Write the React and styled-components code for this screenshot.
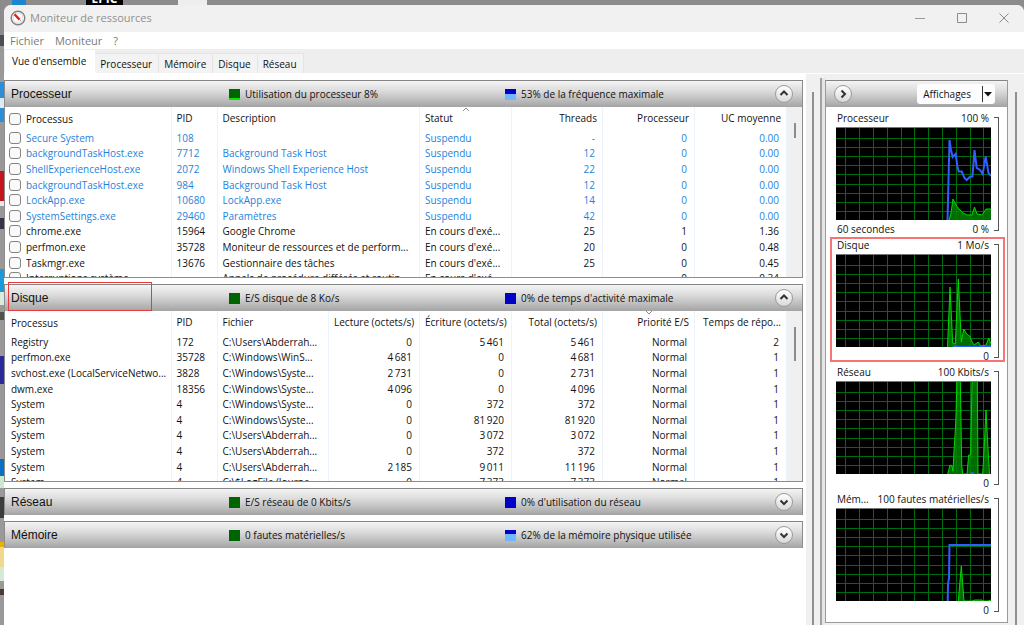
import styled, { createGlobalStyle, css } from "styled-components";
import { useState } from "react";

const GlobalStyle = createGlobalStyle`
  * {
    box-sizing: border-box;
  }
  body {
    margin: 0;
    background: #8d8b8b;
    color: #111;
    font-family: "Open Sans", "Noto Sans", sans-serif;
    font-size: 10px;
    line-height: 14px;
  }
  button, input {
    font: inherit;
    color: inherit;
  }
`;

const Desktop = styled.div`
  position: relative;
  min-height: 100vh;
  padding: 5px 0 0 4px;
  display: flex;
  flex-direction: column;
  overflow: hidden;
  background: linear-gradient(
    #8d8b8b 35px, #4d4d55 35px 46px, #9a9898 46px 82px,
    #2b8ed6 82px 98px, #dfeaf3 98px 108px, #2b8ed6 108px 122px, #9a9898 122px 171px,
    #c4151c 171px 201px, #e9e9e9 201px 206px, #9a9898 206px 218px,
    #35354a 218px 229px, #9a9898 229px 269px, #1b9ad8 269px 292px,
    #dcebdc 292px 305px, #9a9898 305px 312px, #50504c 312px 320px,
    #9a9898 320px 356px, #2a2a9c 356px 384px, #9a9898 384px 459px,
    #0b6fc4 459px 476px, #cfe6cf 476px 488px, #9a9898 488px 497px,
    #3c3c3c 497px 518px, #9a9898 518px 542px, #f0ae00 542px 547px,
    #f0d98c 547px 567px, #d5ead5 567px 581px, #9a9898 581px 589px,
    #4a3a34 589px 595px, #9a9898 595px
  );
`;

const DesktopIcons = styled.div`
  position: absolute;
  top: 0;
  left: 12px;
  right: 0;
  height: 6px;
  display: flex;
  align-items: flex-end;
  overflow: hidden;
`;

const ShortcutTile = styled.span`
  width: ${(p) => p.$width};
  height: 14px;
  margin-right: ${(p) => p.$gap || "0"};
  background: ${(p) => p.$color};
  color: #fff;
  font-weight: 700;
  font-size: 12px;
  line-height: 14px;
  text-align: center;
`;

const Window = styled.main`
  position: relative;
  flex: 1;
  display: flex;
  flex-direction: column;
  border-radius: 7px 7px 0 0;
  overflow: hidden;
  background: #f0f0f0;
`;

const TitleBar = styled.header`
  height: 27px;
  padding: 0 14px 2px 6px;
  display: flex;
  align-items: center;
  gap: 4px;
  background: #f1f1f1;
  color: #909090;
  h1 {
    flex: 1;
    margin: 0;
    font-size: 11px;
    font-weight: 400;
  }
`;

const WindowButtons = styled.div`
  display: flex;
  gap: 29px;
`;

const IconButton = styled.button`
  width: 13px;
  height: 13px;
  padding: 0;
  border: none;
  background: none;
  display: flex;
  align-items: center;
  justify-content: center;
`;

const MenuBar = styled.nav`
  height: 17px;
  padding: 0 6px;
  display: flex;
  align-items: center;
  gap: 11px;
  background: #fff;
  color: #7a7a7a;
  button {
    padding: 0;
    border: none;
    background: none;
    font-size: 11px;
  }
`;

const TabBar = styled.div`
  height: 25px;
  padding-left: 1px;
  display: flex;
  align-items: flex-end;
  background: #eee;
  border-bottom: 1px solid #fff;
`;

const Tab = styled.button`
  height: 20px;
  padding: 0 6px 0 5px;
  border: 1px solid #e4e4e4;
  border-left: none;
  border-bottom: none;
  background: #f3f3f3;
  ${(p) =>
    p.$active &&
    css`
      height: 23px;
      padding: 0 8px 3px 7px;
      border-color: #fff;
      background: #fff;
    `}
`;

const Content = styled.div`
  flex: 1;
  display: flex;
  background: #f0f0f0;
`;

const Sections = styled.div`
  flex: 1;
  min-width: 0;
  padding: 6px 3px 0 0;
  display: flex;
  flex-direction: column;
  gap: 6px;
  background: #fff;
`;

const PaneScroll = styled.div`
  width: ${(p) => p.$width};
  padding-top: 18px;
  display: flex;
  justify-content: center;
  background: #f0f0f0;
  &::after {
    content: "";
    width: 2px;
    background: #909090;
  }
`;

const Splitter = styled.div`
  width: 5px;
  margin-top: 4px;
  border-left: 2px solid #a3a3a3;
  background: #e6e6e6;
`;

const Panel = styled.section`
  position: relative;
  border: 1px solid #8c8c8c;
  border-top: none;
  border-bottom-width: ${(p) => (p.$expanded ? "1px" : "0")};
`;

const barGradient = css`
  border-top: 1px solid #858585;
  background: linear-gradient(#f4f4f4, #dedede 35%, #c4c4c4 65%, #a4a4a4);
`;

const PanelHeader = styled.header`
  height: 27px;
  padding: 0 9px 0 6px;
  display: grid;
  grid-template-columns: 218px 276px 1fr auto;
  align-items: center;
  ${barGradient}
  h2 {
    margin: 0;
    font-family: "Liberation Sans", Arial, sans-serif;
    font-size: 12px;
    font-weight: 400;
  }
`;

const Indicator = styled.span`
  display: flex;
  align-items: center;
  gap: 5px;
  &::before {
    content: "";
    width: 11px;
    height: 11px;
    background: ${(p) => p.$fill};
  }
`;

const RoundButton = styled.button`
  width: 18px;
  height: 18px;
  padding: 0;
  border: 1px solid #9a9a9a;
  border-radius: 50%;
  background: linear-gradient(#fff, #d9d9d9);
  display: flex;
  align-items: center;
  justify-content: center;
`;

const PanelBody = styled.div`
  height: 170px;
  display: flex;
  overflow: hidden;
  background: #fff;
`;

const TableScroll = styled.div`
  flex: none;
  width: 15px;
  padding-top: ${(p) => p.$top};
  background: #f0f0f0;
  &::after {
    content: "";
    display: block;
    width: 2px;
    height: ${(p) => p.$thumb};
    margin: 0 auto;
    background: #8c8c8c;
  }
`;

const DataTable = styled.table`
  flex: 1;
  min-width: 0;
  width: 100%;
  height: 179px;
  table-layout: fixed;
  border-collapse: collapse;
`;

const Cell = styled.td`
  padding: 0 ${(p) => (p.$right ? "7px" : "5px")} 0 5px;
  border-right: 1px solid #edf3fa;
  text-align: ${(p) => (p.$right ? "right" : "left")};
  font-weight: 400;
  white-space: nowrap;
  overflow: hidden;
  &:first-child {
    padding: 0 0 0 6px;
  }
`;

const HeadCell = styled(Cell)`
  position: relative;
  height: 23px;
  padding-right: 5px;
  padding-bottom: 2px;
  svg {
    position: absolute;
    top: 0;
    left: calc(50% - 4px);
  }
`;

const Row = styled.tr`
  color: ${(p) => (p.$suspended ? "#1f82dc" : "inherit")};
`;

const CheckLabel = styled.label`
  display: flex;
  align-items: center;
  gap: 5px;
  margin-left: -2px;
  input {
    appearance: none;
    flex: none;
    width: 12px;
    height: 12px;
    margin: 0;
    border: 1px solid #858585;
    border-radius: 3px;
    background: #f9f9f9;
  }
  input:checked {
    background: #0067c0;
  }
`;

const Sidebar = styled.aside`
  width: 183px;
  margin-top: 6px;
  align-self: flex-start;
  border: 1px solid #9a9a9a;
  border-top: none;
  background: #fff;
`;

const SidebarHeader = styled.header`
  height: 27px;
  padding: 0 12px 0 8px;
  display: flex;
  align-items: center;
  justify-content: space-between;
  ${barGradient}
`;

const ViewsButton = styled.button`
  height: 20px;
  padding: 0 2px 0 6px;
  border: none;
  border-radius: 3px;
  background: #fdfdfd;
  display: flex;
  align-items: center;
  gap: 10px;
`;

const Charts = styled.div`
  padding-bottom: 7px;
`;

const ChartBlock = styled.figure`
  position: relative;
  height: 127px;
  margin: 0;
  padding: 4px 8px 0 10px;
  display: grid;
  grid-template-columns: 1fr 8px;
  align-content: start;
`;

const ChartLabels = styled.figcaption`
  padding: 0 2px 0 1px;
  display: flex;
  justify-content: space-between;
  gap: 4px;
  white-space: nowrap;
`;

const ChartSvg = styled.svg`
  display: block;
  width: 100%;
  height: 93px;
  margin: 2px 0;
  background: #000;
`;

const Bracket = styled.div`
  grid-column: 2;
  grid-row: 1 / span 3;
  margin: 6px 0 5px 3px;
  border: 1px solid #555;
  border-left: none;
`;

const Marker = styled.div`
  position: absolute;
  inset: ${(p) => p.$inset};
  width: ${(p) => p.$width || "auto"};
  height: ${(p) => p.$height || "auto"};
  border: ${(p) => p.$border};
  pointer-events: none;
`;

const green = "linear-gradient(#006400, #006400)";
const greenLow = "linear-gradient(#006400 9px, #00e800 9px)";
const blue = "linear-gradient(#0000c8, #0000c8)";
const blueHalf = "linear-gradient(#0000c8 5px, #6fb7ff 5px)";
const blueThird = "linear-gradient(#0000c8 4px, #6fb7ff 4px)";

const processColumns = [
  { label: "Processus", width: 166 },
  { label: "PID", width: 46 },
  { label: "Description" },
  { label: "Statut", width: 92, sort: "up" },
  { label: "Threads", width: 91, right: true },
  { label: "Processeur", width: 92, right: true },
  { label: "UC moyenne", width: 92, right: true },
];

const processes = [
  ["Secure System", "108", "", "Suspendu", "-", "0", "0.00"],
  ["backgroundTaskHost.exe", "7712", "Background Task Host", "Suspendu", "12", "0", "0.00"],
  ["ShellExperienceHost.exe", "2072", "Windows Shell Experience Host", "Suspendu", "22", "0", "0.00"],
  ["backgroundTaskHost.exe", "984", "Background Task Host", "Suspendu", "12", "0", "0.00"],
  ["LockApp.exe", "10680", "LockApp.exe", "Suspendu", "14", "0", "0.00"],
  ["SystemSettings.exe", "29460", "Paramètres", "Suspendu", "42", "0", "0.00"],
  ["chrome.exe", "15964", "Google Chrome", "En cours d'exé...", "25", "1", "1.36"],
  ["perfmon.exe", "35728", "Moniteur de ressources et de perform...", "En cours d'exé...", "20", "0", "0.48"],
  ["Taskmgr.exe", "13676", "Gestionnaire des tâches", "En cours d'exé...", "25", "0", "0.45"],
  ["Interruptions système", "-", "Appels de procédure différés et routin...", "En cours d'exé...", "-", "0", "0.34"],
];

const diskColumns = [
  { label: "Processus", width: 166 },
  { label: "PID", width: 46 },
  { label: "Fichier" },
  { label: "Lecture (octets/s)", width: 91, right: true },
  { label: "Écriture (octets/s)", width: 92, right: true },
  { label: "Total (octets/s)", width: 91, right: true },
  { label: "Priorité E/S", width: 92, right: true, sort: "down" },
  { label: "Temps de répo...", width: 92, right: true },
];

const diskRows = [
  ["Registry", "172", "C:\\Users\\Abderrah...", "0", "5\u2009461", "5\u2009461", "Normal", "2"],
  ["perfmon.exe", "35728", "C:\\Windows\\WinS...", "4\u2009681", "0", "4\u2009681", "Normal", "1"],
  ["svchost.exe (LocalServiceNetwo...", "3828", "C:\\Windows\\Syste...", "2\u2009731", "0", "2\u2009731", "Normal", "1"],
  ["dwm.exe", "18356", "C:\\Windows\\Syste...", "4\u2009096", "0", "4\u2009096", "Normal", "1"],
  ["System", "4", "C:\\Windows\\Syste...", "0", "372", "372", "Normal", "1"],
  ["System", "4", "C:\\Windows\\Syste...", "0", "81\u2009920", "81\u2009920", "Normal", "1"],
  ["System", "4", "C:\\Users\\Abderrah...", "0", "3\u2009072", "3\u2009072", "Normal", "1"],
  ["System", "4", "C:\\Users\\Abderrah...", "0", "372", "372", "Normal", "1"],
  ["System", "4", "C:\\Users\\Abderrah...", "2\u2009185", "9\u2009011", "11\u2009196", "Normal", "1"],
  ["System", "4", "C:\\$LogFile (Journa...", "0", "7\u2009373", "7\u2009373", "Normal", "1"],
];

const charts = [
  {
    name: "Processeur",
    max: "100 %",
    footer: "60 secondes",
    min: "0 %",
    area: "113,93 115,86 117,72 120,78 123,82 127,86 131,88 136,88 138.5,80 141,87 146,88 150,82 155,82",
    line: "111.5,93 113.5,13 115,23 116.7,30 119.7,27 121.5,40 122.7,44.5 125.7,44.5 128.5,51 130.7,53 133.7,50 136.5,49.5 138.5,23 140.7,41 144,43 146.7,47 149.7,29.5 152.5,46 155,49",
  },
  {
    name: "Disque",
    max: "1 Mo/s",
    min: "0",
    marked: true,
    area: "111.5,93 114,33 116.7,89 119.3,90 122.3,25 125.3,88 127.7,75 130.7,80 133.7,82 135.7,87 138,91 142.3,88 144.7,92 150,91 152.7,84 155,90",
    line: "117,93 119,92 121,93 144,93 148,92.5 155,92.5",
  },
  {
    name: "Réseau",
    max: "100 Kbits/s",
    min: "0",
    area: "111.7,93 114,84 116,85 117,90 118,70 119.7,43 121,0 124.3,0 125.7,84 126.7,93 131,93 132.7,74 134.7,74 136,0 141.3,0 142,93 146.7,93 148.5,60 150,29 151.7,62 153.5,93",
    line: "134,93 136,92 138,93",
  },
  {
    name: "Mém...",
    max: "100 fautes matérielles/s",
    min: "0",
    area: "122.3,93 125.3,58 128,93 136,93 139,92 142,92 146,92 147,93 152,93 155,92",
    line: "111.7,93 112,76 113,70 113.5,37 155,37",
  },
];

const gridX = [9, 23, 37, 51, 65, 78, 92, 106, 120, 134, 147];
const gridY = [11, 20, 29, 38, 47, 57, 66, 75, 84];

function Chevron({ dir }) {
  const paths = {
    up: "M2.5 7 6 3.5 9.5 7",
    down: "M2.5 4.5 6 8 9.5 4.5",
    right: "M4.5 2.5 8 6 4.5 9.5",
  };
  return (
    <svg width="12" height="12" viewBox="0 0 12 12" fill="none" stroke="#333" strokeWidth="2">
      <path d={paths[dir]} />
    </svg>
  );
}

function SortMark({ dir }) {
  return (
    <svg width="8" height="5" viewBox="0 0 8 5" fill="none" stroke="#8a8a8a">
      <path d={dir === "up" ? "M1 4 4 1 7 4" : "M1 0 4 3 7 0"} />
    </svg>
  );
}

function Section({ title, first, firstFill, second, secondFill, open, children }) {
  const [expanded, setExpanded] = useState(!!open);
  return (
    <Panel $expanded={expanded}>
      <PanelHeader>
        <h2>{title}</h2>
        <Indicator $fill={firstFill}>{first}</Indicator>
        <Indicator $fill={secondFill}>{second}</Indicator>
        <RoundButton
          type="button"
          aria-label={title}
          aria-expanded={expanded}
          onClick={() => setExpanded(!expanded)}
        >
          <Chevron dir={expanded ? "up" : "down"} />
        </RoundButton>
      </PanelHeader>
      {expanded && children}
    </Panel>
  );
}

function Grid({ columns, rows, checkable }) {
  const renderName = (text) =>
    checkable ? (
      <CheckLabel>
        <input type="checkbox" />
        {text}
      </CheckLabel>
    ) : (
      text
    );

  return (
    <DataTable>
      <colgroup>
        {columns.map((c) => (
          <col key={c.label} width={c.width} />
        ))}
      </colgroup>
      <thead>
        <tr>
          {columns.map((c, i) => (
            <HeadCell as="th" key={c.label} $right={c.right}>
              {i === 0 ? renderName(c.label) : c.label}
              {c.sort && <SortMark dir={c.sort} />}
            </HeadCell>
          ))}
        </tr>
      </thead>
      <tbody>
        {rows.map((row, r) => (
          <Row key={r} $suspended={row[3] === "Suspendu"}>
            {row.map((value, i) => (
              <Cell key={i} $right={columns[i].right}>
                {i === 0 ? renderName(value) : value}
              </Cell>
            ))}
          </Row>
        ))}
      </tbody>
    </DataTable>
  );
}

function Chart({ name, max, min, footer, area, line, marked }) {
  const start = area.split(",")[0];
  const end = area.split(" ").pop().split(",")[0];
  return (
    <ChartBlock>
      <ChartLabels>
        <span>{name}</span>
        <span>{max}</span>
      </ChartLabels>
      <ChartSvg viewBox="0 0 155 93" preserveAspectRatio="none">
        <g stroke="#006c10">
          {gridX.map((x) => (
            <path key={x} d={`M${x + 0.5} 0V93`} />
          ))}
          {gridY.map((y) => (
            <path key={y} d={`M0 ${y + 0.5}H155`} />
          ))}
        </g>
        <polygon points={`${start},93 ${area} ${end},93`} fill="#008000" fillOpacity="0.85" />
        <polyline points={area} fill="none" stroke="#00d800" />
        <polyline points={line} fill="none" stroke="#2f5fff" strokeWidth="2" />
        <path d="M0 .5H155" stroke="#777" />
      </ChartSvg>
      <ChartLabels as="div">
        <span>{footer}</span>
        <span>{min}</span>
      </ChartLabels>
      <Bracket />
      {marked && <Marker $inset="3px 2px -1px 4px" $border="2px solid #f87474" />}
    </ChartBlock>
  );
}

const tabs = ["Vue d'ensemble", "Processeur", "Mémoire", "Disque", "Réseau"];

export default function App() {
  const [tab, setTab] = useState(tabs[0]);

  return (
    <>
      <GlobalStyle />
      <Desktop>
        <DesktopIcons>
          <ShortcutTile $width="14px" $gap="60px" $color="#1c86d1" />
          <ShortcutTile $width="37px" $gap="55px" $color="#000">
            EPIC
          </ShortcutTile>
          <ShortcutTile $width="29px" $color="#eee" />
        </DesktopIcons>
        <Window>
          <TitleBar>
            <svg width="16" height="16" viewBox="0 0 16 16" fill="none">
              <circle cx="8" cy="8" r="6.8" fill="#fff" stroke="#858080" strokeWidth="1.4" />
              <circle cx="8" cy="8" r="5" stroke="#dedada" />
              <path d="M4.5 4.2 9.6 9.6" stroke="#e81c1c" strokeWidth="2.4" />
              <path d="M9.4 9.4 10.8 10.8" stroke="#888" />
            </svg>
            <h1>Moniteur de ressources</h1>
            <WindowButtons>
              <IconButton type="button" aria-label="Réduire">
                <svg width="10" height="10" viewBox="0 0 10 10" stroke="#999">
                  <path d="M0 5.5H10" />
                </svg>
              </IconButton>
              <IconButton type="button" aria-label="Agrandir">
                <svg width="10" height="10" viewBox="0 0 10 10" stroke="#8c8c8c" fill="none">
                  <path d="M.5.5H9.5V9.5H.5Z" />
                </svg>
              </IconButton>
              <IconButton type="button" aria-label="Fermer">
                <svg width="10" height="10" viewBox="0 0 10 10" stroke="#8c8c8c">
                  <path d="M.5.5 9.5 9.5M9.5.5.5 9.5" />
                </svg>
              </IconButton>
            </WindowButtons>
          </TitleBar>
          <MenuBar>
            <button type="button">Fichier</button>
            <button type="button">Moniteur</button>
            <button type="button">?</button>
          </MenuBar>
          <TabBar role="tablist">
            {tabs.map((t) => (
              <Tab
                key={t}
                type="button"
                role="tab"
                aria-selected={t === tab}
                $active={t === tab}
                onClick={() => setTab(t)}
              >
                {t}
              </Tab>
            ))}
          </TabBar>
          <Content>
            <Sections>
              <Section
                title="Processeur"
                first="Utilisation du processeur 8%"
                firstFill={greenLow}
                second="53% de la fréquence maximale"
                secondFill={blueHalf}
                open
              >
                <PanelBody>
                  <Grid columns={processColumns} rows={processes} checkable />
                  <TableScroll $top="16px" $thumb="15px" />
                </PanelBody>
              </Section>
              <Section
                title="Disque"
                first="E/S disque de 8 Ko/s"
                firstFill={green}
                second="0% de temps d'activité maximale"
                secondFill={blue}
                open
              >
                <PanelBody>
                  <Grid columns={diskColumns} rows={diskRows} />
                  <TableScroll $top="16px" $thumb="34px" />
                </PanelBody>
                <Marker
                  $inset="-2px auto auto 3px"
                  $width="144px"
                  $height="29px"
                  $border="1px solid #e83a3a"
                />
              </Section>
              <Section
                title="Réseau"
                first="E/S réseau de 0 Kbits/s"
                firstFill={green}
                second="0% d'utilisation du réseau"
                secondFill={blue}
              />
              <Section
                title="Mémoire"
                first="0 fautes matérielles/s"
                firstFill={green}
                second="62% de la mémoire physique utilisée"
                secondFill={blueThird}
              />
            </Sections>
            <PaneScroll $width="14px" />
            <Splitter />
            <Sidebar>
              <SidebarHeader>
                <RoundButton type="button" aria-label="Masquer les graphiques">
                  <Chevron dir="right" />
                </RoundButton>
                <ViewsButton type="button">
                  Affichages
                  <svg width="12" height="20" viewBox="0 0 12 20">
                    <path d="M1.5 2V18" stroke="#333" />
                    <path d="M3 8H11L7 12.5Z" fill="#111" />
                  </svg>
                </ViewsButton>
              </SidebarHeader>
              <Charts>
                {charts.map((c) => (
                  <Chart key={c.name} {...c} />
                ))}
              </Charts>
            </Sidebar>
            <PaneScroll $width="16px" />
          </Content>
        </Window>
      </Desktop>
    </>
  );
}
